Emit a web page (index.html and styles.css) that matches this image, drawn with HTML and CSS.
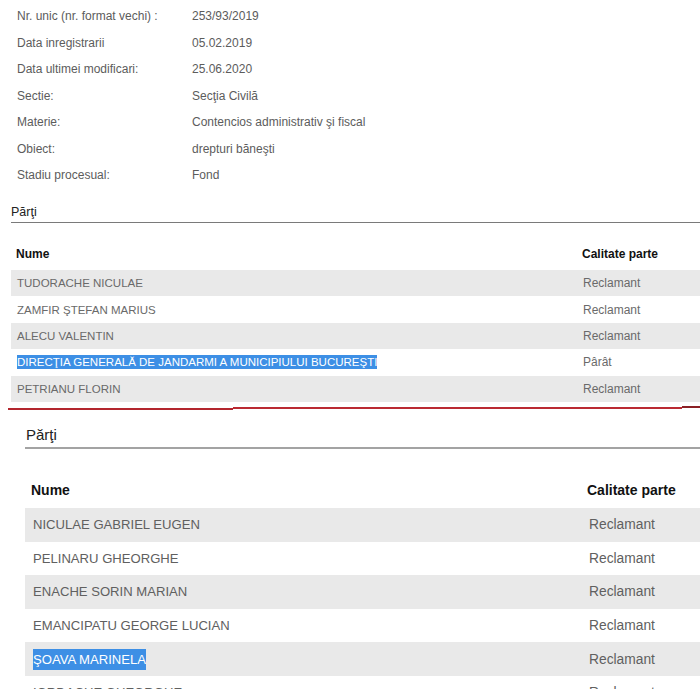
FILE: index.html
```html
<!DOCTYPE html>
<html lang="ro">
<head>
<meta charset="utf-8">
<title>Dosar</title>
<link rel="stylesheet" href="styles.css">
</head>
<body>
<section class="top">
  <div class="info">
    <div class="info-row"><span class="lbl">Nr. unic (nr. format vechi) :</span><span class="val">253/93/2019</span></div>
    <div class="info-row"><span class="lbl">Data inregistrarii</span><span class="val">05.02.2019</span></div>
    <div class="info-row"><span class="lbl">Data ultimei modificari:</span><span class="val">25.06.2020</span></div>
    <div class="info-row"><span class="lbl">Sectie:</span><span class="val">Secţia Civilă</span></div>
    <div class="info-row"><span class="lbl">Materie:</span><span class="val">Contencios administrativ şi fiscal</span></div>
    <div class="info-row"><span class="lbl">Obiect:</span><span class="val">drepturi băneşti</span></div>
    <div class="info-row"><span class="lbl">Stadiu procesual:</span><span class="val">Fond</span></div>
  </div>
  <h3 class="sect">Părţi</h3>
  <div class="parts">
    <div class="prow head"><span>Nume</span><span>Calitate parte</span></div>
    <div class="prow odd"><span class="nm">TUDORACHE NICULAE</span><span>Reclamant</span></div>
    <div class="prow"><span class="nm">ZAMFIR ŞTEFAN MARIUS</span><span>Reclamant</span></div>
    <div class="prow odd"><span class="nm">ALECU VALENTIN</span><span>Reclamant</span></div>
    <div class="prow"><span class="nm"><span class="sel">DIRECŢIA GENERALĂ DE JANDARMI A MUNICIPIULUI BUCUREŞTI</span></span><span>Pârât</span></div>
    <div class="prow odd"><span class="nm">PETRIANU FLORIN</span><span>Reclamant</span></div>
  </div>
</section>
<div class="redline"><i class="seg s1"></i><i class="seg s2"></i><i class="seg s3"></i></div>
<section class="bottom">
  <h3 class="sect">Părţi</h3>
  <div class="parts">
    <div class="prow head"><span>Nume</span><span>Calitate parte</span></div>
    <div class="prow odd"><span class="nm">NICULAE GABRIEL EUGEN</span><span>Reclamant</span></div>
    <div class="prow"><span class="nm">PELINARU GHEORGHE</span><span>Reclamant</span></div>
    <div class="prow odd"><span class="nm">ENACHE SORIN MARIAN</span><span>Reclamant</span></div>
    <div class="prow"><span class="nm">EMANCIPATU GEORGE LUCIAN</span><span>Reclamant</span></div>
    <div class="prow odd"><span class="nm"><span class="sel">ŞOAVA MARINELA</span></span><span>Reclamant</span></div>
    <div class="prow"><span class="nm">IORDACHE GHEORGHE</span><span>Reclamant</span></div>
  </div>
</section>
</body>
</html>
```

FILE: styles.css
```css
* { box-sizing: border-box; }
html, body { margin: 0; padding: 0; background: #fff; }
body {
  font-family: "Liberation Sans", Arial, sans-serif;
  color: #5a5a5a;
  overflow: hidden;
  height: 689px;
}
.sect { margin: 0; font-weight: normal; color: #222; }

/* ---------- top ---------- */
.top { padding-left: 11px; }
.info { padding-top: 3px; padding-left: 6px; }
.info-row {
  display: grid;
  grid-template-columns: 175px 1fr;
  height: 26.5px;
  line-height: 26.5px;
  font-size: 12px;
  color: #5c5c5c;
}
.top .sect {
  margin-top: 15.5px;
  font-size: 12.5px;
  line-height: 16px;
  height: 19px;
  padding-bottom: 2px;
  border-bottom: 1px solid #7a7a7a;
}
.top .parts { margin-top: 20px; }
.top .prow {
  display: grid;
  grid-template-columns: 566px 1fr;
  height: 26.4px;
  align-items: center;
  padding-left: 6px;
  font-size: 12px;
  color: #6a6a6a;
}
.top .prow .nm { font-size: 11.5px; }
.top .prow.head {
  height: 27px;
  align-items: start;
  line-height: 22px;
  font-weight: bold;
  color: #111;
  padding-left: 5px;
}
.top .prow.head span:last-child { margin-left: 0; }
.prow.odd { background: #e9e9e9; }
.sel {
  background: #3d8fe5;
  color: #fff;
  padding: 1px 0;
}

/* ---------- red line ---------- */
.redline {
  display: flex;
  align-items: flex-start;
  height: 24px;
  padding-top: 5px;
  padding-left: 8px;
}
.seg { display: block; height: 2px; background: #b3262e; }
.s1 { width: 225px; margin-top: 1px; }
.s2 { width: 449px; background: #ba2a32; }
.s3 { width: 18px; margin-top: -1px; background: #8b2025; }

/* ---------- bottom ---------- */
.bottom { padding-left: 25px; }
.bottom .sect {
  font-size: 15px;
  line-height: 18px;
  height: 23px;
  padding-bottom: 3px;
  border-bottom: 2px solid #a3a3a3;
  padding-left: 1px;
}
.bottom .parts { margin-top: 29px; }
.bottom .prow {
  display: grid;
  grid-template-columns: 556px 1fr;
  height: 33.6px;
  align-items: center;
  padding-left: 8px;
  font-size: 13.8px;
  color: #606060;
}
.bottom .prow .nm { font-size: 13.1px; }
.bottom .prow.head {
  height: 30px;
  align-items: start;
  line-height: 24px;
  font-size: 14px;
  font-weight: bold;
  color: #111;
  padding-left: 6px;
}
.bottom .prow.head span:last-child { margin-left: 0; }
.bottom .sel { padding: 3px 0; }
```
